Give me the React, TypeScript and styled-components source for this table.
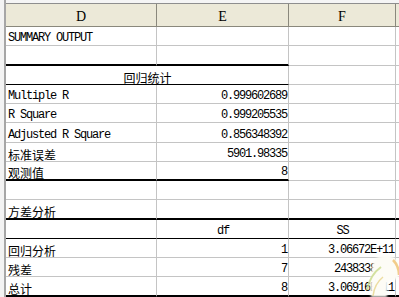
import React from 'react'
import styled, { createGlobalStyle } from 'styled-components'

const GlobalStyle = createGlobalStyle`
  html, body {
    margin: 0;
    padding: 0;
    background: #ffffff;
  }
`

const COLS = '151px 132px 107px 1fr'

const LATIN = '"Liberation Mono", "DejaVu Sans Mono", monospace'
const CJK = '"Noto Sans CJK SC", "Noto Sans", sans-serif'

type Line = 'grid' | 'thin' | 'thick'
type Align = 'left' | 'right' | 'center'

const lineStyle = (line: Line) =>
  line === 'thick' ? '2px solid #000000' : line === 'thin' ? '1px solid #000000' : '1px solid #c4c4c4'

const Sheet = styled.div`
  position: relative;
  display: flex;
  width: 399px;
  height: 297px;
  overflow: hidden;
  background: #ffffff;
`

const Gutter = styled.div`
  width: 6px;
  flex: none;
  background: #f3f3f3;
  border-right: 2px solid #a6a6a6;
  box-sizing: border-box;
`

const Main = styled.div`
  flex: 1;
  display: flex;
  flex-direction: column;
`

const TopStrip = styled.div`
  height: 4px;
  background: #f5f5f5;
  border-bottom: 1px solid #8e8e8e;
  box-sizing: border-box;
`

const HeaderRow = styled.div`
  display: grid;
  grid-template-columns: ${COLS};
  height: 23px;
  background: #ece9d8;
  border-bottom: 1px solid #8a887c;
  box-sizing: border-box;
`

const ColHead = styled.div`
  display: flex;
  align-items: flex-end;
  justify-content: center;
  padding-bottom: 1px;
  border-right: 1px solid #8a887c;
  font-family: "Liberation Serif", "DejaVu Serif", serif;
  font-size: 14px;
  line-height: 16px;
  color: #000000;
`

const Row = styled.div`
  display: grid;
  grid-template-columns: ${COLS};
  height: 19.28px;
`

const Cell = styled.div<{ $line?: Line; $align?: Align; $cjk?: boolean; $span?: number }>`
  display: flex;
  align-items: flex-end;
  justify-content: ${p => (p.$align === 'right' ? 'flex-end' : p.$align === 'center' ? 'center' : 'flex-start')};
  grid-column: span ${p => p.$span ?? 1};
  box-sizing: border-box;
  padding: 0 1px 0 2px;
  border-right: 1px solid #c4c4c4;
  border-bottom: ${p => lineStyle(p.$line ?? 'grid')};
  font-family: ${p => (p.$cjk ? CJK : LATIN)};
  font-size: 12px;
  letter-spacing: ${p => (p.$cjk ? '0' : '-1.2px')};
  line-height: 13px;
  color: #000000;
  white-space: nowrap;
`

// small round stamp sitting over the lower right corner of the sheet
const Stamp = styled.svg`
  position: absolute;
  right: 0;
  bottom: 0;
`

type RowSpec = {
  d?: string
  e?: string
  f?: string
  dLine?: Line
  eLine?: Line
  fLine?: Line
  gLine?: Line
  merged?: string
  eCenter?: boolean
}

const rows: RowSpec[] = [
  { d: 'SUMMARY OUTPUT' },
  { dLine: 'thick', eLine: 'thick' },
  { merged: '回归统计', dLine: 'thin' },
  { d: 'Multiple R', e: '0.999602689' },
  { d: 'R Square', e: '0.999205535' },
  { d: 'Adjusted R Square', e: '0.856348392' },
  { d: '标准误差', e: '5901.98335' },
  { d: '观测值', e: '8', dLine: 'thick', eLine: 'thick' },
  {},
  { d: '方差分析', dLine: 'thick', eLine: 'thick', fLine: 'thick', gLine: 'thick' },
  { e: 'df', f: 'SS', eCenter: true, dLine: 'thin', eLine: 'thin', fLine: 'thin', gLine: 'thin' },
  { d: '回归分析', e: '1', f: '3.06672E+11' },
  { d: '残差', e: '7', f: '2438338588' },
  { d: '总计', e: '8', f: '3.06916E+11', dLine: 'thick', eLine: 'thick', fLine: 'thick', gLine: 'thick' }
]

const isCjk = (s?: string) => !!s && /[\u4e00-\u9fff]/.test(s)

const SheetRow: React.FC<{ row: RowSpec }> = ({ row }) => (
  <Row>
    {row.merged ? (
      <Cell $span={2} $align="center" $cjk $line={row.dLine}>
        {row.merged}
      </Cell>
    ) : (
      <>
        <Cell $cjk={isCjk(row.d)} $line={row.dLine}>
          {row.d}
        </Cell>
        <Cell $align={row.eCenter ? 'center' : 'right'} $line={row.eLine}>
          {row.e}
        </Cell>
      </>
    )}
    <Cell $align={row.eCenter ? 'center' : 'right'} $line={row.fLine}>
      {row.f}
    </Cell>
    <Cell $line={row.gLine} />
  </Row>
)

export default function App() {
  return (
    <>
      <GlobalStyle />
      <Sheet>
        <Gutter />
        <Main>
          <TopStrip />
          <HeaderRow>
            <ColHead>D</ColHead>
            <ColHead>E</ColHead>
            <ColHead>F</ColHead>
            <ColHead />
          </HeaderRow>
          {rows.map((r, i) => (
            <SheetRow key={i} row={r} />
          ))}
        </Main>
        <Stamp width="36" height="46" viewBox="0 0 36 46">
          <defs>
            <filter id="soft" x="-20%" y="-20%" width="140%" height="140%">
              <feGaussianBlur stdDeviation="0.8" />
            </filter>
          </defs>
          <path
            d="M10 11 Q15 3 26 4 Q36 7 36 18 L36 27 Q30 29 25 30 L24 46 L8 46 Q6 30 10 11 Z"
            fill="#fdfcf6"
            filter="url(#soft)"
          />
          <path d="M4 39 C6 29 11 21 18 16" stroke="#c8d98a" strokeWidth="2" fill="none" opacity="0.8" />
          <path d="M10 45 C11 36 15 30 20 26" stroke="#e7d58c" strokeWidth="1.5" fill="none" opacity="0.8" />
          <path d="M30 9 C34 13 36 18 36 24" stroke="#efc071" strokeWidth="2.5" fill="none" opacity="0.8" />
        </Stamp>
      </Sheet>
    </>
  )
}
